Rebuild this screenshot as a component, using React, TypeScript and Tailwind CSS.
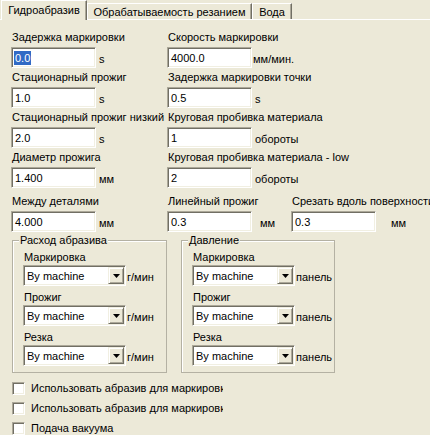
import React from 'react';

// Sunken 3D edit box, XP classic style
function Edit({ value, selected, w = 'w-[85px]' }: { value: string; selected?: boolean; w?: string }) {
  return (
    <div
      className={`${w} h-[21px] shrink-0 bg-white border border-t-[#aca899] border-l-[#aca899] border-b-white border-r-white shadow-[inset_1px_1px_0_#716f64,inset_-1px_-1px_0_#f1efe2] flex items-center pl-[2px] leading-[14px]`}
    >
      {selected ? <span className="bg-[#316ac5] text-white px-[1px]">{value}</span> : <span className="px-[1px]">{value}</span>}
    </div>
  );
}

function Combo() {
  return (
    <div className="w-[103px] h-[21px] shrink-0 bg-white border border-t-[#aca899] border-l-[#aca899] border-b-white border-r-white shadow-[inset_1px_1px_0_#716f64,inset_-1px_-1px_0_#f1efe2] flex items-center p-[1px] pl-[3px] leading-[14px]">
      <span className="flex-1 whitespace-nowrap">By machine</span>
      <div className="w-[16px] h-[17px] bg-[#ece9d8] border border-t-[#f1efe2] border-l-[#f1efe2] border-b-[#716f64] border-r-[#716f64] shadow-[inset_1px_1px_0_#fff,inset_-1px_-1px_0_#aca899] flex items-center justify-center">
        <svg width="7" height="4" viewBox="0 0 7 4">
          <path d="M0 0h7L3.5 4z" fill="#000" />
        </svg>
      </div>
    </div>
  );
}

interface FieldProps {
  label: string;
  value: string;
  unit?: string;
  unitGap?: string;
  selected?: boolean;
}

function Field({ label, value, unit, unitGap = 'ml-[3px]', selected }: FieldProps) {
  return (
    <div className="flex flex-col">
      <div className="h-[14px] leading-[14px] whitespace-nowrap pl-[1px]">{label}</div>
      <div className="flex items-center mt-[3px]">
        <Edit value={value} selected={selected} />
        {unit && <span className={`${unitGap} pt-[2px] leading-[14px] whitespace-nowrap`}>{unit}</span>}
      </div>
    </div>
  );
}

function Group({ title, unit, w }: { title: string; unit: string; w: string }) {
  const rows = ['Маркировка', 'Прожиг', 'Резка'];
  return (
    <fieldset className={`${w} border border-[#b4b1a3] shadow-[inset_1px_1px_0_#fff] pl-[10px] pt-[3px] pb-[6px] min-w-0`}>
      <legend className="ml-[-4px] px-[1px] leading-[14px] bg-[#ece9d8]">{title}</legend>
      <div className="flex flex-col gap-[4px]">
        {rows.map(r => (
          <div key={r} className="flex flex-col">
            <div className="h-[14px] leading-[14px] pl-[1px]">{r}</div>
            <div className="flex items-center mt-[1px]">
              <Combo />
              <span className="ml-[1px] pt-[2px] leading-[14px] whitespace-nowrap">{unit}</span>
            </div>
          </div>
        ))}
      </div>
    </fieldset>
  );
}

function Check({ label }: { label: string }) {
  return (
    <div className="flex items-center h-[20px] gap-[6px]">
      <div className="w-[13px] h-[13px] shrink-0 bg-white border border-t-[#aca899] border-l-[#aca899] border-b-white border-r-white shadow-[inset_1px_1px_0_#716f64,inset_-1px_-1px_0_#f1efe2]" />
      <div className="w-[192px] overflow-hidden whitespace-nowrap leading-[14px]">{label}</div>
    </div>
  );
}

export default function App() {
  return (
    <div
      className="w-[430px] h-[435px] overflow-hidden bg-[#ece9d8] text-black text-[11px]"
      style={{ fontFamily: '"Liberation Sans", Arial, sans-serif' }}
    >
      {/* Tabs */}
      <div className="flex items-end h-[20px] border-b border-white pl-[1px]">
        <div className="w-[86px] h-[20px] -mb-px bg-[#ece9d8] border-t border-l border-white border-r border-r-[#716f64] shadow-[inset_-1px_0_0_#aca899] flex items-center justify-center leading-[14px] pb-[2px]">
          Гидроабразив
        </div>
        <div className="w-[165px] h-[16px] border-t border-l border-white border-r border-r-[#716f64] shadow-[inset_-1px_0_0_#aca899] flex items-center justify-center leading-[14px]">
          Обрабатываемость резанием
        </div>
        <div className="w-[40px] h-[16px] border-t border-l border-white border-r border-r-[#716f64] shadow-[inset_-1px_0_0_#aca899] flex items-center justify-center leading-[14px]">
          Вода
        </div>
      </div>

      {/* Fields */}
      <div className="grid grid-cols-[156px_124px_139px] gap-y-[2px] pl-[11px] pt-[10px]">
        <Field label="Задержка маркировки" value="0.0" unit="s" selected />
        <Field label="Скорость маркировки" value="4000.0" unit="мм/мин." unitGap="ml-[1px]" />
        <div />

        <Field label="Стационарный прожиг" value="1.0" unit="s" />
        <Field label="Задержка маркировки точки" value="0.5" unit="s" />
        <div />

        <Field label="Стационарный прожиг низкий" value="2.0" unit="s" />
        <Field label="Круговая пробивка материала" value="1" unit="обороты" />
        <div />

        <Field label="Диаметр прожига" value="1.400" unit="мм" />
        <Field label="Круговая пробивка материала - low" value="2" unit="обороты" />
        <div />

        <div className="mt-[4px]">
          <Field label="Между деталями" value="4.000" unit="мм" />
        </div>
        <div className="mt-[4px]">
          <Field label="Линейный прожиг" value="0.3" unit="мм" unitGap="ml-[8px]" />
        </div>
        <div className="mt-[4px]">
          <Field label="Срезать вдоль поверхности" value="0.3" unit="мм" unitGap="ml-[15px]" />
        </div>
      </div>

      {/* Groups */}
      <div className="flex gap-[14px] pl-[12px] mt-[1px]">
        <Group title="Расход абразива" unit="г/мин" w="w-[155px]" />
        <Group title="Давление" unit="панель" w="w-[154px]" />
      </div>

      {/* Checkboxes */}
      <div className="flex flex-col pl-[12px] mt-[5px]">
        <Check label="Использовать абразив для маркировки" />
        <Check label="Использовать абразив для маркировки" />
        <Check label="Подача вакуума" />
      </div>
    </div>
  );
}
